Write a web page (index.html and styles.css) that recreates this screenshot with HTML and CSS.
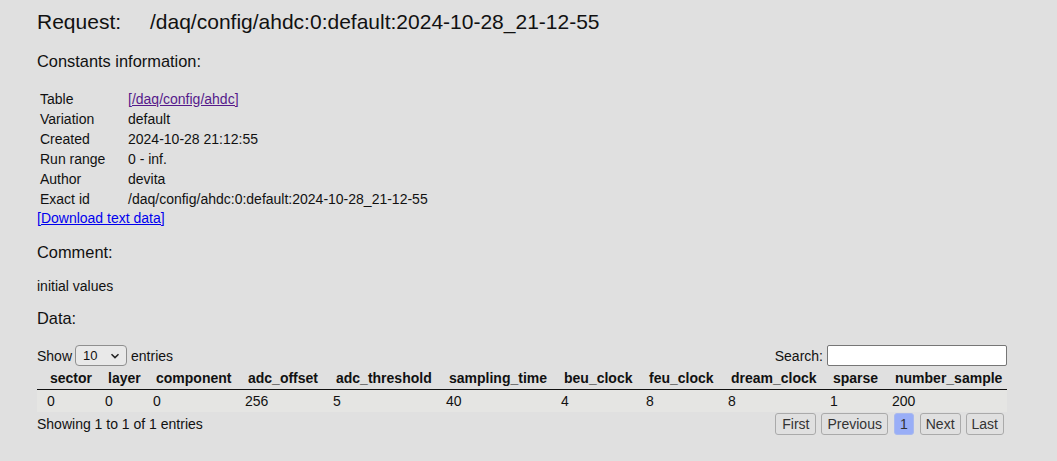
FILE: index.html
```html
<!DOCTYPE html>
<html>
<head>
<meta charset="utf-8">
<link rel="stylesheet" href="styles.css">
</head>
<body>
<div class="page">
  <h1 class="request"><span class="req-label">Request:</span><span class="req-path">/daq/config/ahdc:0:default:2024-10-28_21-12-55</span></h1>
  <h2 class="section">Constants information:</h2>
  <table class="info">
    <tr><td class="lbl">Table</td><td><a class="visited" href="#">[/daq/config/ahdc]</a></td></tr>
    <tr><td class="lbl">Variation</td><td>default</td></tr>
    <tr><td class="lbl">Created</td><td>2024-10-28 21:12:55</td></tr>
    <tr><td class="lbl">Run range</td><td>0 - inf.</td></tr>
    <tr><td class="lbl">Author</td><td>devita</td></tr>
    <tr><td class="lbl">Exact id</td><td>/daq/config/ahdc:0:default:2024-10-28_21-12-55</td></tr>
  </table>
  <a class="download" href="#">[Download text data]</a>
  <h2 class="section comment-h">Comment:</h2>
  <p class="comment">initial values</p>
  <h2 class="section data-h">Data:</h2>

  <div class="dt">
    <div class="dt-top">
      <label class="length">Show <span class="select">10<svg width="10" height="6" viewBox="0 0 10 6"><path d="M1.5 1.2 L5 4.6 L8.5 1.2" fill="none" stroke="#222" stroke-width="1.5"/></svg></span> entries</label>
      <label class="search">Search: <span class="input"></span></label>
    </div>
    <table class="data">
      <colgroup>
        <col style="width:58px"><col style="width:48px"><col style="width:92px"><col style="width:88px"><col style="width:113px"><col style="width:115px"><col style="width:85px"><col style="width:82px"><col style="width:102px"><col style="width:62px"><col style="width:125px">
      </colgroup>
      <thead>
        <tr><th>sector</th><th>layer</th><th>component</th><th>adc_offset</th><th>adc_threshold</th><th>sampling_time</th><th>beu_clock</th><th>feu_clock</th><th>dream_clock</th><th>sparse</th><th>number_sample</th></tr>
      </thead>
      <tbody>
        <tr><td>0</td><td>0</td><td>0</td><td>256</td><td>5</td><td>40</td><td>4</td><td>8</td><td>8</td><td>1</td><td>200</td></tr>
      </tbody>
    </table>
    <div class="dt-bottom">
      <div class="info-text">Showing 1 to 1 of 1 entries</div>
      <div class="paging">
        <span class="btn first">First</span>
        <span class="btn">Previous</span>
        <span class="btn current">1</span>
        <span class="btn">Next</span>
        <span class="btn">Last</span>
      </div>
    </div>
  </div>
</div>
</body>
</html>
```
FILE: styles.css
```css
html, body {
  margin: 0;
  padding: 0;
  background: #e0e0e0;
}
body {
  font-family: "Liberation Sans", Arial, sans-serif;
  font-size: 14px;
  color: #111;
}
.page {
  padding: 9px 50px 0 37px;
}
.request {
  font-size: 21px;
  font-weight: normal;
  margin: 0;
  line-height: 26px;
  display: flex;
}
.req-label {
  width: 113px;
}
.section {
  font-size: 16.4px;
  font-weight: normal;
  margin: 0;
  line-height: 20px;
}
.request + .section {
  margin-top: 16px;
}
.info {
  margin-top: 17px;
  border-spacing: 2px;
  font-size: 14px;
}
.info td {
  padding: 1px;
  line-height: 16px;
}
.info td.lbl {
  width: 84px;
}
a.visited {
  color: #551a8b;
}
.download {
  color: #0000ee;
  display: block;
  line-height: 16px;
  margin-top: 0;
}
.comment-h {
  margin-top: 16px;
}
.comment {
  margin: 16px 0 0;
  line-height: 16px;
}
.data-h {
  margin-top: 14px;
}
.dt {
  margin-top: 16px;
  width: 970px;
}
.dt-top {
  display: flex;
  justify-content: space-between;
  align-items: center;
  height: 23px;
  margin-bottom: 1px;
}
.length, .search {
  display: flex;
  align-items: center;
}
.select {
  display: inline-flex;
  align-items: center;
  justify-content: space-between;
  box-sizing: border-box;
  width: 52px;
  height: 21px;
  margin: 0 4px 0 3px;
  padding: 0 6px 0 7px;
  border: 1px solid #8f8f8f;
  border-radius: 4px;
  background: #e9e9e9;
  font-size: 13px;
}
.input {
  display: inline-block;
  box-sizing: border-box;
  width: 180px;
  height: 21px;
  margin-left: 4px;
  border: 1px solid #767676;
  border-radius: 2px;
  background: #fff;
}
table.data {
  width: 970px;
  border-collapse: collapse;
  table-layout: fixed;
}
table.data th {
  text-align: left;
  font-weight: bold;
  padding: 2px 0 2px 13px;
  line-height: 17px;
  border-bottom: 1px solid #111;
  white-space: nowrap;
}
table.data td {
  padding: 3px 0 3px 10px;
  line-height: 16px;
  background: #e5e5e3;
}
.dt-bottom {
  display: flex;
  justify-content: space-between;
  align-items: center;
  margin-top: 1px;
}
.paging {
  display: flex;
  gap: 5px;
  margin-right: 3px;
}
.btn {
  box-sizing: border-box;
  height: 22px;
  line-height: 20px;
  padding: 0 5px;
  border: 1px solid #aaa;
  border-radius: 3px;
  color: #333;
  background: #e0e0e0;
}
.btn.first {
  padding: 0 6px;
}
.btn.current {
  background: #99aef7;
  border-color: #a9b9ee;
  margin: 0 1px;
}
```
